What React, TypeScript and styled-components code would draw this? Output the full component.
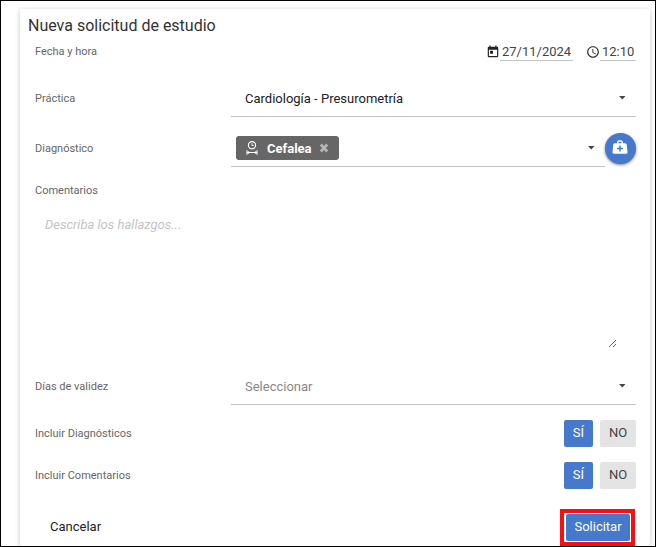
import React, { useState } from 'react';
import styled, { createGlobalStyle } from 'styled-components';
import { MdAccessTime, MdToday } from 'react-icons/md';

const GlobalStyle = createGlobalStyle`
  *, *::before, *::after { box-sizing: border-box; }
  html, body, #root { height: 100%; }
  body {
    margin: 0;
    background: #fff;
    color: #333;
    font-family: Roboto, "Liberation Sans", sans-serif;
    font-size: 13px;
    overflow: hidden;
  }
  button, input, select, textarea { font: inherit; color: inherit; margin: 0; }
`;

const Frame = styled.main`
  height: 100%;
  border: 1px solid #000;
  padding: 8px 5px 0 19px;
  overflow: hidden;
`;

const Card = styled.form`
  min-height: 100%;
  padding: 8px 14px 0 8px;
  border-radius: 2px;
  background: #fff;
  box-shadow: 0 1px 5px rgba(0, 0, 0, 0.24);
`;

const Title = styled.h1`
  margin: 0;
  font-size: 16px;
  font-weight: 400;
  line-height: 18px;
`;

const Fields = styled.div`
  padding-left: 7px;
`;

const Row = styled.div<{ $gap: number }>`
  display: grid;
  grid-template-columns: 196px 1fr;
  align-items: center;
  margin-top: ${({ $gap }) => $gap}px;
`;

const Label = styled.label`
  font-size: 11px;
  line-height: 14px;
  color: #666;
`;

const Moment = styled.div`
  display: flex;
  justify-content: flex-end;
  gap: 13px;
`;

const MomentField = styled.label`
  display: flex;
  align-items: center;
  color: #222;
`;

const MomentInput = styled.input<{ $width: number }>`
  width: ${({ $width }) => $width}px;
  height: 19px;
  padding: 0 2px;
  border: 0;
  border-bottom: 1px solid #c4c4c4;
  outline: 0;
  background: transparent;
  color: #444;
`;

const FieldLine = styled.div`
  display: flex;
  align-items: center;
  flex: 1;
  height: 37px;
  border-bottom: 1px solid #c4c4c4;
`;

const SelectBox = styled.div`
  display: flex;
  align-items: center;
  flex: 1;
  height: 100%;
  padding-right: 10px;
`;

const Select = styled.select<{ $muted?: boolean }>`
  appearance: none;
  flex: 1;
  min-width: 0;
  height: 100%;
  padding: 0 14px;
  border: 0;
  outline: 0;
  background: transparent;
  color: ${({ $muted }) => ($muted ? '#888' : '#222')};
`;

const Diagnosis = styled.div`
  display: flex;
  align-items: center;
`;

const Chip = styled.span`
  display: flex;
  align-items: center;
  height: 24px;
  margin-left: 5px;
  padding: 0 10px;
  border-radius: 3px;
  background: #666;
  color: #fff;
  font-weight: 700;
`;

const ChipText = styled.span`
  margin: 0 7px 0 9px;
`;

const ChipRemove = styled.button`
  display: flex;
  padding: 0;
  border: 0;
  background: transparent;
  color: #b4b4b4;
`;

const RoundButton = styled.button`
  display: flex;
  align-items: center;
  justify-content: center;
  width: 31px;
  height: 31px;
  padding: 0 1px 4px 0;
  border: 0;
  border-radius: 50%;
  background: #4679cc;
  color: #fff;
  box-shadow: 0 1px 3px rgba(0, 0, 0, 0.5);
`;

const Comments = styled.div`
  display: flex;
  flex-direction: column;
  margin: 17px 19px 0 0;
`;

const TextArea = styled.textarea`
  height: 138px;
  margin-top: 12px;
  padding: 6px 10px;
  border: 0;
  outline: 0;
  resize: vertical;
  background: transparent;
  line-height: 18px;
  &::placeholder {
    color: #c4c4c4;
    font-style: italic;
  }
`;

const Toggle = styled.div`
  display: flex;
  justify-content: flex-end;
  gap: 7px;
`;

const Button = styled.button<{ $active?: boolean; $width: number }>`
  width: ${({ $width }) => $width}px;
  height: 27px;
  padding: 0 0 2px;
  border: 0;
  border-radius: 2px;
  background: ${({ $active }) => ($active ? '#4679cc' : '#e4e4e4')};
  color: ${({ $active }) => ($active ? '#fff' : '#444')};
`;

const Footer = styled.footer`
  display: flex;
  align-items: center;
  justify-content: space-between;
  margin: 20px 1px 0 22px;
`;

const CancelButton = styled.button`
  padding: 0 0 2px;
  border: 0;
  background: transparent;
  color: #222;
`;

const Highlight = styled.div`
  display: flex;
  padding: 1px 1px 1px 2px;
  border: 4px solid #fb0d14;
`;

const Caret = () => (
  <svg width="8" height="4" viewBox="0 0 8 4" aria-hidden="true">
    <path d="M1 0H7.5L4.3 3.5Z" fill="#444" />
  </svg>
);

const OnsetIcon = () => (
  <svg width="12" height="14" viewBox="0 0 12 14" fill="none" stroke="#fff" aria-hidden="true">
    <circle cx="6" cy="4.2" r="3.6" strokeWidth="1.1" />
    <path d="M6 2.3V4.5H7.8" strokeWidth="0.9" />
    <path d="M1 9.2V13.8M11 9.2V13.8M1 11.5H11" strokeWidth="1.1" />
    <path d="M3 10.5L1.5 11.5L3 12.5ZM9 10.5L10.5 11.5L9 12.5Z" fill="#fff" strokeWidth="0.6" />
  </svg>
);

const CrossIcon = () => (
  <svg width="10" height="10" viewBox="0 0 10 10" aria-hidden="true">
    <path d="M1.8 1.5L8.2 8.5M8.2 1.5L1.8 8.5" stroke="currentColor" strokeWidth="2.8" />
  </svg>
);

const MedicalBagIcon = () => (
  <svg width="18" height="18" viewBox="0 0 24 24" fill="currentColor" aria-hidden="true">
    <path d="M10 3L8 5V7H5C3.85 7 3.12 8 3 9L2 19C1.88 20 2.54 21 4 21H20C21.46 21 22.12 20 22 19L21 9C20.88 8 20.06 7 19 7H16V5L14 3H10M10 5H14V7H10V5M11 10H13V13H16V15H13V18H11V15H8V13H11V10Z" />
  </svg>
);

function YesNo({ label, gap }: { label: string; gap: number }) {
  const [value, setValue] = useState(true);
  return (
    <Row $gap={gap}>
      <Label as="span">{label}</Label>
      <Toggle role="group" aria-label={label}>
        <Button type="button" $width={29} $active={value} aria-pressed={value} onClick={() => setValue(true)}>SÍ</Button>
        <Button type="button" $width={36} $active={!value} aria-pressed={!value} onClick={() => setValue(false)}>NO</Button>
      </Toggle>
    </Row>
  );
}

export default function App() {
  const [hasDiagnosis, setHasDiagnosis] = useState(true);
  return (
    <>
      <GlobalStyle />
      <Frame>
        <Card onSubmit={(event) => event.preventDefault()}>
          <Title>Nueva solicitud de estudio</Title>
          <Fields>
            <Row $gap={7}>
              <Label as="span">Fecha y hora</Label>
              <Moment>
                <MomentField>
                  <MdToday size={14} />
                  <MomentInput $width={73} aria-label="Fecha" defaultValue="27/11/2024" />
                </MomentField>
                <MomentField>
                  <MdAccessTime size={14} />
                  <MomentInput $width={36} aria-label="Hora" defaultValue="12:10" />
                </MomentField>
              </Moment>
            </Row>
            <Row $gap={19}>
              <Label htmlFor="practica">Práctica</Label>
              <FieldLine>
                <SelectBox>
                  <Select id="practica">
                    <option>Cardiología - Presurometría</option>
                  </Select>
                  <Caret />
                </SelectBox>
              </FieldLine>
            </Row>
            <Row $gap={13}>
              <Label htmlFor="diagnostico">Diagnóstico</Label>
              <Diagnosis>
                <FieldLine>
                  {hasDiagnosis && (
                    <Chip>
                      <OnsetIcon />
                      <ChipText>Cefalea</ChipText>
                      <ChipRemove type="button" aria-label="Quitar Cefalea" onClick={() => setHasDiagnosis(false)}>
                        <CrossIcon />
                      </ChipRemove>
                    </Chip>
                  )}
                  <SelectBox>
                    <Select id="diagnostico">
                      <option aria-label="Ninguno" />
                    </Select>
                    <Caret />
                  </SelectBox>
                </FieldLine>
                <RoundButton type="button" aria-label="Agregar diagnóstico">
                  <MedicalBagIcon />
                </RoundButton>
              </Diagnosis>
            </Row>
            <Comments>
              <Label htmlFor="comentarios">Comentarios</Label>
              <TextArea id="comentarios" placeholder="Describa los hallazgos..." />
            </Comments>
            <Row $gap={20}>
              <Label htmlFor="validez">Días de validez</Label>
              <FieldLine>
                <SelectBox>
                  <Select id="validez" $muted>
                    <option>Seleccionar</option>
                  </Select>
                  <Caret />
                </SelectBox>
              </FieldLine>
            </Row>
            <YesNo label="Incluir Diagnósticos" gap={15} />
            <YesNo label="Incluir Comentarios" gap={15} />
          </Fields>
          <Footer>
            <CancelButton type="button">Cancelar</CancelButton>
            <Highlight>
              <Button type="submit" $width={64} $active>Solicitar</Button>
            </Highlight>
          </Footer>
        </Card>
      </Frame>
    </>
  );
}
